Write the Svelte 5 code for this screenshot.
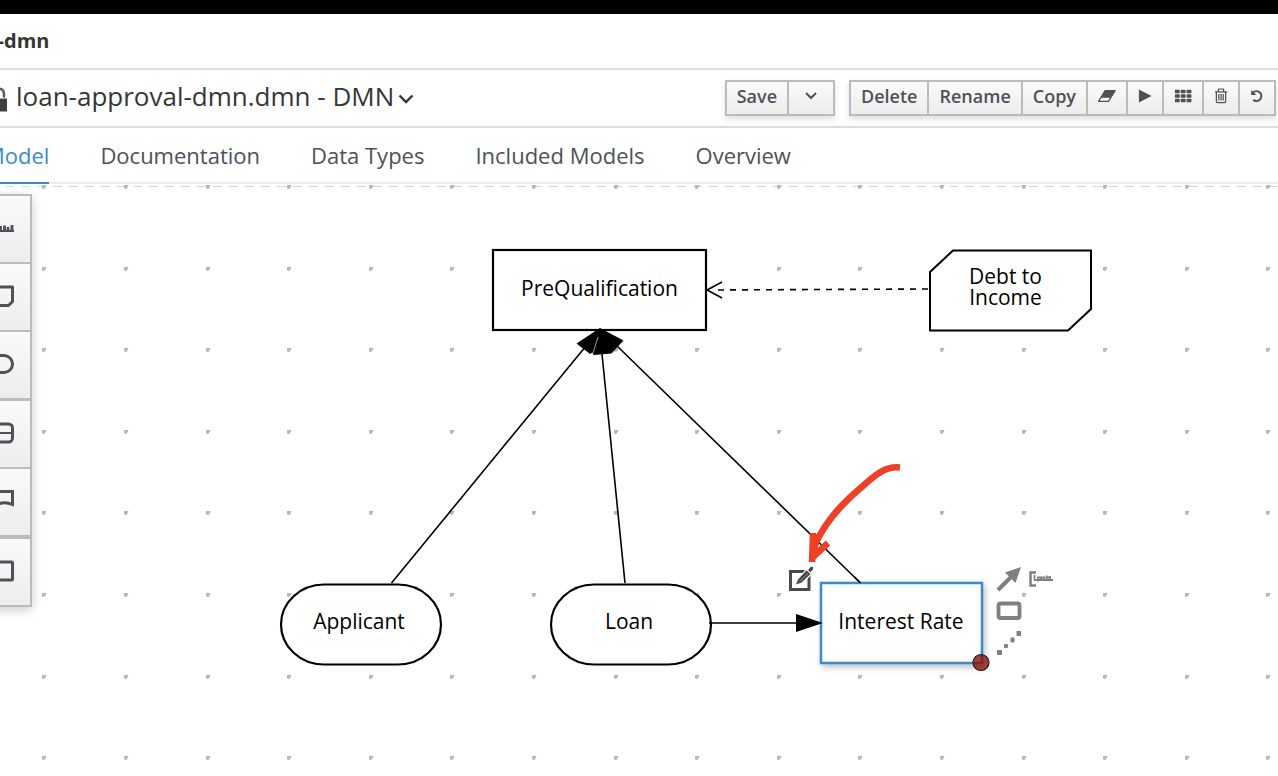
<script>
  const tabs = ['Model', 'Documentation', 'Data Types', 'Included Models', 'Overview'];
  let active = $state('Model');

  // Canvas coordinates: one grid step every 81.6 units.
  const step = 81.6;
  const dots = [];
  for (let row = 0; row < 14; row++) {
    for (let col = 0; col < 32; col++) {
      dots.push({ x: Math.round(42.4 + col * step), y: Math.round(1 + row * step) });
    }
  }

  const palette = [
    'Text annotation',
    'Business knowledge model',
    'Input data',
    'Decision service',
    'Knowledge source',
    'Decision'
  ];
</script>

<div class="app">
  <div class="topbar"></div>
  <div class="crumbs"><span class="space">loan-approval-dmn</span></div>

  <header class="titlebar">
    <svg class="lock" width="24" height="28" viewBox="0 0 24 28" aria-hidden="true">
      <path d="M11 14V9" fill="none" stroke="#5a5a5a" stroke-width="3" />
      <path d="M13 4.500h2q5 .500 5 6v3" fill="none" stroke="#5a5a5a" stroke-width="2.500" />
      <rect x="2" y="14.500" width="21" height="13" fill="#404040" />
    </svg>
    <h1>loan-approval-dmn.dmn - DMN</h1>
    <button class="plain" aria-label="Versions">
      <svg width="16" height="10" viewBox="0 0 16 10"><path d="M1.5 1.5L8 8l6.5-6.5" fill="none" stroke="#363636" stroke-width="2.4" /></svg>
    </button>

    <div class="actions">
      <div class="group">
        <button>Save</button>
        <button class="drop" aria-label="Save options">
          <svg width="12" height="8" viewBox="0 0 12 8"><path d="M1 1l5 5 5-5" fill="none" stroke="#4d5258" stroke-width="2" /></svg>
        </button>
      </div>
      <div class="group">
        <button>Delete</button>
        <button>Rename</button>
        <button>Copy</button>
        <button class="icon wide" aria-label="Clear">
          <svg width="20" height="14" viewBox="0 0 20 14"><path d="M8 1h11l-7.5 12h-11z" fill="none" stroke="#4d5258" stroke-width="1.4" stroke-linejoin="round" /><path d="M8 1h11l-4.6 7.4H3.4z" fill="#4d5258" stroke="#4d5258" /></svg>
        </button>
        <button class="icon" aria-label="Run">
          <svg width="16" height="16" viewBox="0 0 16 16"><path d="M1 0.5l14.5 7.5L1 15.5z" fill="#4d5258" /></svg>
        </button>
        <button class="icon wide" aria-label="Grid">
          <svg width="20" height="16" viewBox="0 0 20 16" fill="#4d5258">
            {#each [0, 1, 2] as r}{#each [0, 1, 2] as c}
              <rect x={1 + c * 6.5} y={1 + r * 5} width="5.4" height="4" rx="1" />
            {/each}{/each}
          </svg>
        </button>
        <button class="icon" aria-label="Trash">
          <svg width="16" height="18" viewBox="0 0 16 18" fill="none" stroke="#4d5258" stroke-width="1.4"><path d="M1 4.2h14M5 4V1.7q0-.7.7-.7h4.600q.7 0 .7.700V4M2.700 4.500v10.800q0 1.200 1.200 1.200h8.200q1.200 0 1.200-1.200V4.500M5.500 6.800v7.200M8 6.800v7.200M10.500 6.800v7.200" /></svg>
        </button>
        <button class="icon" aria-label="Undo">
          <svg width="18" height="18" viewBox="0 0 18 18"><path d="M4 4.500A6.300 6.300 0 1 1 4.300 14" fill="none" stroke="#4d5258" stroke-width="2.700" /><path d="M1.500 1.200v6.600h6.800z" fill="#4d5258" /></svg>
        </button>
      </div>
    </div>
  </header>

  <nav class="tabs">
    {#each tabs as t}
      <button class:active={active === t} onclick={() => (active = t)}>{t}</button>
    {/each}
  </nav>

  <main class="stage">
    <svg class="diagram" aria-label="Decision requirements diagram">
      <line x1="5" y1="2.5" x2="100%" y2="2.5" stroke="#d9d9d9" stroke-dasharray="9 7" />
      {#each dots as d}
        <path d="M{d.x} {d.y}h4.500l-.500 1.500-1.500 2.500-2.500-.500z" fill="#b8b8b8" />
      {/each}

      <g transform="translate(0 -184)">
        <g fill="#fff" stroke="#000" stroke-width="2.200">
          <rect x="493" y="250" width="213" height="80" />
          <path d="M953 250.500h138v58.500l-23 21.500h-138v-58.500z" stroke-width="2" />
          <rect x="281" y="584.500" width="160" height="80" rx="43" ry="40" />
          <rect x="551" y="584.500" width="160" height="80" rx="43" ry="40" />
        </g>

        <g fill="none" stroke="#000" stroke-width="1.600">
          <path d="M391.500 583L586 346M625 583L602 354M860 582.500L614 343M709 623h88" />
          <path d="M928 289L712 290" stroke-dasharray="6 6" />
          <path d="M722 282l-15 8 15 8" />
        </g>
        <path d="M600 328l-23.500 15.500 13.500 10.500 2.500-1.500 1 2.500 18-1.500 12-13z" />
        <path d="M593 353l5-16" stroke="#fff" stroke-width="0.600" />

        <rect class="selected" x="821" y="583" width="161" height="80" />
        <path d="M796 614l27 9-27 9z" />
        <path d="M860.500 583l-6-6" stroke="#000" stroke-width="1.600" />

        <g class="labels">
          <text x="599.500" y="296">PreQualification</text>
          <text x="1005.500" y="284">Debt to</text>
          <text x="1005.500" y="305">Income</text>
          <text x="359" y="629">Applicant</text>
          <text x="629" y="629">Loan</text>
          <text x="901" y="629">Interest Rate</text>
        </g>

        <circle cx="981" cy="662.500" r="8" fill="#84130d" fill-opacity="0.800" stroke="#2b1615" stroke-width="1.200" />

        <!-- edit -->
        <rect x="790.500" y="571.500" width="18.500" height="18" fill="#fff" stroke="#494949" stroke-width="3" />
        <path d="M795 585.500l2.500-6.500 9-9.500 5 4.500-9.500 9z" fill="#494949" stroke="#fff" stroke-width="1.200" />
        <path d="M808.500 569.500l2-2.500h2.500v2.500l-2.500 2.500z" fill="#494949" />
        <path d="M799.500 581.500l8.500-8" stroke="#999" stroke-width="0.800" />

        <!-- node tools -->
        <g stroke="#7d8085" fill="none">
          <path d="M998 590l15-15" stroke-width="4" />
          <path d="M1021 567l-16 5.500 10.500 10.500z" fill="#7d8085" stroke="none" />
          <path d="M1036 572.500h-5.500v13h5.500" stroke-width="2.500" />
          <path d="M1034.500 575v5M1038 577.500v4M1041 576.500v4M1044 577.500v3M1046.500 575.500v5M1050 576v4M1034 580h19M1037 577.500h8M1047 577.500h4" stroke-width="1.800" />
          <rect x="998.500" y="603.500" width="21" height="14.500" rx="2" stroke-width="3.800" />
        </g>
        <g fill="#7d8085">
          <rect x="997" y="650" width="5" height="5" /><rect x="1004" y="644" width="4" height="4" rx="1" />
          <rect x="1010.500" y="637.500" width="4" height="5" rx="1" /><rect x="1016.500" y="631" width="4.500" height="5" />
        </g>

        <!-- freehand pointer -->
        <g fill="none" stroke="#ee4026" stroke-linejoin="round">
          <path d="M900 467.500C886 466 876 474 864 485C846 500 826 519 815 545" stroke-width="6.500" />
          <path d="M813 533L812 562" stroke-width="6.500" />
          <path d="M817 534L813 557L828 543" stroke-width="6.500" />
        </g>
      </g>
    </svg>

    <div class="palette">
      {#each palette as name, i}
        <button aria-label={name}>
          <svg width="28" height="24" viewBox="0 0 28 24" fill="none" stroke="#4d5258" stroke-width="3">
            {#if i === 0}
              <path d="M0 15h28" stroke-width="2" /><path d="M14.500 10v5M18.500 9.500v5.500M22 11v4M26 9v6" stroke-width="2.800" />
            {:else if i === 1}
              <path d="M6 3h20.500v14.500l-4 4h-21V7.500z" stroke-linejoin="round" />
            {:else if i === 2}
              <rect x="1.500" y="3.500" width="25" height="17" rx="8.500" />
            {:else if i === 3}
              <rect x="1.500" y="3" width="25" height="18" rx="4" /><path d="M2 12h24" stroke-width="2" />
            {:else if i === 4}
              <path d="M1.500 2.500h25v13q-4-1.800-8-1.800t-8.500 2.500-8.500 1z" />
            {:else}
              <rect x="1.500" y="3" width="25" height="18" rx="1" />
            {/if}
          </svg>
        </button>
      {/each}
    </div>
  </main>
</div>

<style>
  :global(body) {
    margin: 0;
    background: #fff;
  }
  .app {
    min-height: 100vh;
    display: flex;
    flex-direction: column;
    overflow: hidden;
    font-family: 'Open Sans', 'Noto Sans', sans-serif;
    color: #363636;
  }
  button {
    font: inherit;
    cursor: pointer;
    margin: 0;
  }
  svg {
    display: block;
  }
  .topbar {
    height: 14px;
    background: #000;
  }
  .crumbs {
    display: flex;
    align-items: center;
    height: 52px;
    padding-bottom: 2px;
    border-bottom: 2px solid #dcdcdc;
    font-size: 20px;
    font-weight: 700;
  }
  .space {
    margin-left: -141px;
  }
  .titlebar {
    display: flex;
    align-items: center;
    height: 56px;
    border-bottom: 2px solid #dcdcdc;
  }
  .lock {
    flex: none;
    margin-left: -16px;
  }
  h1 {
    margin: 0 0 0 8px;
    padding-bottom: 4px;
    font-size: 26px;
    line-height: 36px;
    font-weight: 400;
    white-space: nowrap;
  }
  .plain {
    border: 0;
    background: none;
    padding: 2px 4px 0;
  }
  .actions {
    display: flex;
    gap: 14px;
    margin-left: auto;
    margin-right: 2px;
  }
  .group {
    display: flex;
    box-shadow: 0 3px 6px rgba(0, 0, 0, 0.14);
  }
  .group button {
    display: flex;
    align-items: center;
    justify-content: center;
    height: 36px;
    padding: 0 10px 5px;
    border: 2px solid #bbb;
    background: linear-gradient(#fafafa, #ededed);
    color: #4d5258;
    font-size: 18px;
    font-weight: 600;
  }
  .group button + button {
    margin-left: -2px;
  }
  .group .drop {
    width: 48px;
  }
  .group .icon {
    width: 38px;
  }
  .group .wide {
    width: 42px;
  }
  .tabs {
    display: flex;
    gap: 51px;
    height: 54px;
    padding-bottom: 2px;
    margin-left: -15px;
    box-shadow: inset 0 -2px #ececec;
  }
  .tabs button {
    box-sizing: content-box;
    height: 54px;
    padding: 0;
    border: 0;
    border-bottom: 2px solid transparent;
    background: none;
    color: #4d5258;
    font-size: 22px;
    white-space: nowrap;
  }
  .tabs .active {
    color: #398bce;
    border-color: #398bce;
  }
  .stage {
    position: relative;
    flex: 1;
    display: flex;
    min-height: 560px;
  }
  .diagram {
    flex: 1;
    min-width: 0;
    overflow: hidden;
  }
  .labels {
    font-size: 21px;
    text-anchor: middle;
    fill: #000;
  }
  .selected {
    fill: #fff;
    stroke: #398bce;
    stroke-width: 2.5px;
    filter: drop-shadow(2px 3px 3px rgba(0, 0, 0, 0.25));
  }
  .palette {
    position: absolute;
    top: 10px;
    left: -38px;
    display: flex;
    flex-direction: column;
    width: 70px;
    box-shadow: 0 3px 10px rgba(0, 0, 0, 0.2);
  }
  .palette button {
    display: flex;
    align-items: center;
    justify-content: flex-end;
    height: 70px;
    padding: 0 16px 2px 0;
    border: 2px solid #bbb;
    background: linear-gradient(#fafafa, #ededed);
  }
  .palette button + button {
    margin-top: -2px;
  }
  .palette button:nth-child(4) {
    margin-top: -1px;
  }
  .palette button:last-child {
    margin-top: 0;
  }
</style>
